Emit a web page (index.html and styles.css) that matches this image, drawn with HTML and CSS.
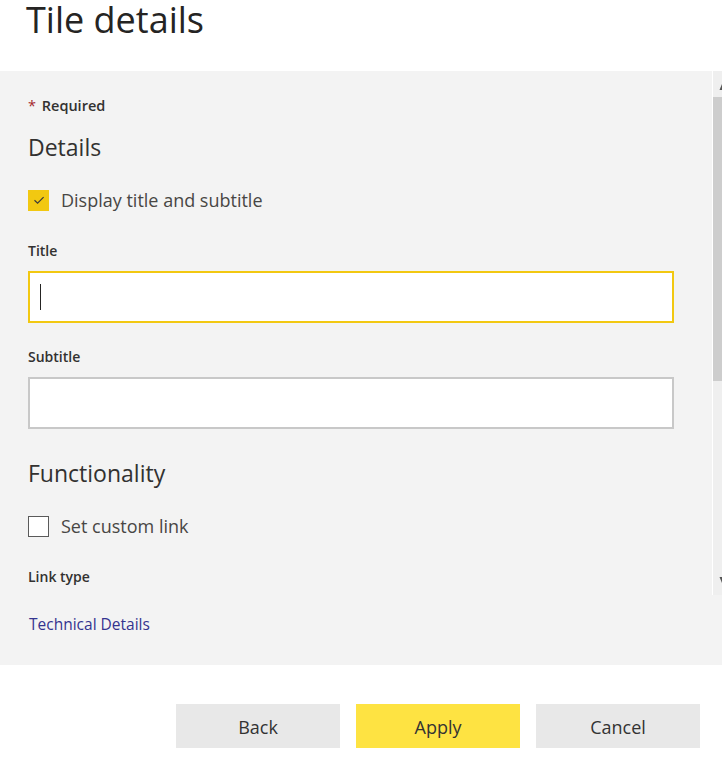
FILE: index.html
```html
<!DOCTYPE html>
<html lang="en">
<head>
<meta charset="utf-8">
<title>Tile details</title>
<link rel="stylesheet" href="styles.css">
</head>
<body>
<header class="header">
  <h1 class="page-title">Tile details</h1>
</header>
<section class="panel">
  <div class="scroll-area">
    <div class="content">
      <div class="required"><span class="star">*</span> Required</div>
      <h2 class="section-title">Details</h2>
      <label class="check-row">
        <span class="checkbox checked">
          <svg width="14" height="14" viewBox="0 0 14 14"><path d="M2.5 7.2 L5.6 10.2 L11.6 4.2" fill="none" stroke="#3b3a39" stroke-width="1.2"/></svg>
        </span>
        <span class="check-label">Display title and subtitle</span>
      </label>
      <div class="field-label first">Title</div>
      <div class="input focused"><span class="caret"></span></div>
      <div class="field-label">Subtitle</div>
      <div class="input"></div>
      <h2 class="section-title func">Functionality</h2>
      <label class="check-row">
        <span class="checkbox"></span>
        <span class="check-label">Set custom link</span>
      </label>
      <div class="field-label link-type">Link type</div>
    </div>
    <div class="scrollbar">
      <svg class="arrow" width="9" height="26" viewBox="0 0 9 26"><path d="M9 13 L6.5 19 L9 19 Z" fill="#555"/></svg>
      <div class="thumb"></div>
      <div class="track-rest"></div>
      <svg class="arrow" width="9" height="26" viewBox="0 0 9 26"><path d="M9 14 L6.5 8 L9 8 Z" fill="#555"/></svg>
    </div>
  </div>
  <a class="tech-link" href="#">Technical Details</a>
</section>
<footer class="footer">
  <button class="btn">Back</button>
  <button class="btn primary">Apply</button>
  <button class="btn">Cancel</button>
</footer>
</body>
</html>
```

FILE: styles.css
```css
html, body {
  margin: 0;
  padding: 0;
  background: #ffffff;
  overflow: hidden;
}
body {
  font-family: "Open Sans", "Noto Sans", sans-serif;
  color: #333333;
  width: 722px;
  height: 764px;
}
.header {
  height: 71px;
  padding-left: 26px;
  box-sizing: border-box;
}
.page-title {
  margin: 0;
  font-size: 36px;
  line-height: 40px;
  font-weight: 400;
  color: #252423;
}
.panel {
  background: #f3f3f3;
  height: 594px;
  display: flex;
  flex-direction: column;
}
.scroll-area {
  height: 524px;
  display: flex;
}
.content {
  flex: 1;
  padding: 25px 38px 0 28px;
  display: flex;
  flex-direction: column;
  align-items: stretch;
}
.required {
  font-size: 14.5px;
  line-height: 20px;
  font-weight: 600;
  color: #323130;
  height: 20px;
}
.star {
  color: #a4262c;
  font-weight: 400;
  margin-right: 2px;
}
.section-title {
  margin: 15px 0 0;
  font-size: 23px;
  line-height: 32px;
  font-weight: 400;
  color: #323130;
}
.section-title.func {
  margin-top: 28px;
}
.check-row {
  display: flex;
  align-items: center;
  height: 22px;
  margin-top: 26px;
}
.checkbox {
  width: 21px;
  height: 21px;
  box-sizing: border-box;
  border: 1px solid #5a5a5a;
  background: #ffffff;
  display: flex;
  align-items: center;
  justify-content: center;
  flex: none;
}
.checkbox.checked {
  background: #f2c811;
  border-color: #f2c811;
}
.check-label {
  margin-left: 12px;
  font-size: 18px;
  line-height: 22px;
  color: #484644;
}
.field-label {
  font-size: 14px;
  line-height: 20px;
  font-weight: 600;
  color: #323130;
  margin-top: 24px;
  margin-bottom: 10px;
}
.field-label.first {
  margin-top: 30px;
}
.field-label.link-type {
  margin-top: 30px;
  margin-bottom: 0;
}
.input {
  height: 52px;
  box-sizing: border-box;
  border: 2px solid #c8c8c8;
  background: #ffffff;
  display: flex;
  align-items: center;
  padding-left: 10px;
}
.input.focused {
  border-color: #f2c811;
}
.caret {
  width: 1px;
  height: 26px;
  background: #252423;
}
.scrollbar {
  width: 9px;
  border-left: 1px solid #ffffff;
  background: #efefef;
  display: flex;
  flex-direction: column;
}
.arrow {
  display: block;
  flex: none;
}
.thumb {
  height: 284px;
  background: #cdcdcd;
  flex: none;
}
.track-rest {
  flex: 1;
}
.tech-link {
  margin: 19px 0 0 29px;
  font-size: 15.5px;
  line-height: 20px;
  color: #34348f;
  text-decoration: none;
  align-self: flex-start;
}
.footer {
  height: 99px;
  display: flex;
  justify-content: flex-end;
  align-items: flex-start;
  gap: 16px;
  padding: 39px 22px 0 0;
  box-sizing: border-box;
}
.btn {
  width: 164px;
  height: 44px;
  box-sizing: border-box;
  border: none;
  background: #e8e8e8;
  font-family: "Open Sans", "Noto Sans", sans-serif;
  font-size: 18px;
  color: #333333;
  padding: 2px 0 0 0;
  line-height: 42px;
}
.btn.primary {
  background: #fee342;
}
```
